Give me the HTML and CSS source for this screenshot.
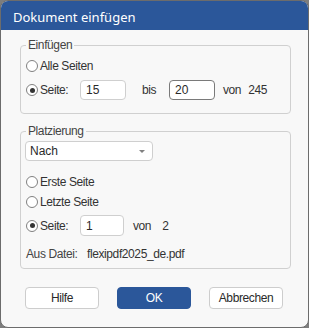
FILE: index.html
```html
<!DOCTYPE html>
<html lang="de">
<head>
    <meta charset="UTF-8">
    <meta name="viewport" content="width=device-width, initial-scale=1.0">
    <title>Dokument einfügen</title>
    <link rel="stylesheet" href="styles.css">
</head>
<body>

    <div class="dialog">
        <div class="title-bar">Dokument einfügen</div>

        <div class="dialog-body">
            <fieldset class="group group-insert">
                <legend>Einfügen</legend>

                <div class="row row-first">
                    <label class="radio-label">
                        <input type="radio" name="range"> Alle Seiten
                    </label>
                </div>

                <div class="row row-input">
                    <label class="radio-label radio-fixed">
                        <input type="radio" name="range" checked> Seite:
                    </label>
                    <input type="text" class="num-input" value="15">
                    <span class="word-bis">bis</span>
                    <input type="text" class="num-input focused" value="20">
                    <span class="word-von">von</span>
                    <span>245</span>
                </div>
            </fieldset>

            <fieldset class="group group-place">
                <legend>Platzierung</legend>

                <div class="select-box">
                    <span>Nach</span>
                    <span class="select-arrow"></span>
                </div>

                <div class="row row-radio row-gap">
                    <label class="radio-label">
                        <input type="radio" name="place"> Erste Seite
                    </label>
                </div>
                <div class="row row-radio">
                    <label class="radio-label">
                        <input type="radio" name="place"> Letzte Seite
                    </label>
                </div>
                <div class="row row-input row-page">
                    <label class="radio-label radio-fixed">
                        <input type="radio" name="place" checked> Seite:
                    </label>
                    <input type="text" class="num-input small" value="1">
                    <span class="word-von2">von</span>
                    <span>2</span>
                </div>

                <div class="row row-file">
                    <span class="file-label">Aus Datei:</span>
                    <span>flexipdf2025_de.pdf</span>
                </div>
            </fieldset>

            <div class="buttons">
                <button>Hilfe</button>
                <button class="primary">OK</button>
                <button>Abbrechen</button>
            </div>
        </div>
    </div>

</body>
</html>
```

FILE: styles.css
```css
body {
    margin: 0;
    background-color: #7d7d7d;
    font-family: "Liberation Sans", Arial, sans-serif;
    font-size: 12px;
    color: #333333;
}

.dialog {
    box-sizing: border-box;
    width: 309px;
    height: 328px;
    border: 1px solid #6c6c6c;
    border-radius: 8px;
    overflow: hidden;
    background-color: #f8f8f8;
}

.title-bar {
    height: 25px;
    padding: 4px 0 0 12px;
    line-height: 25px;
    background-color: #2b579a;
    color: #ffffff;
    font-family: "Noto Sans", "Open Sans", sans-serif;
    font-size: 13px;
}

.dialog-body {
    padding: 7px 17px 0 19px;
}

.group {
    margin: 0;
    padding: 0 5px;
    border: 1px solid #d0d0d0;
    border-radius: 4px;
    min-width: 0;
}

.group legend {
    padding: 0 2px;
    line-height: 16px;
    color: #444444;
    letter-spacing: -0.4px;
}

.group-insert {
    padding-bottom: 13px;
}

.group-place {
    margin-top: 9px;
    padding-bottom: 6px;
}

.row {
    display: flex;
    align-items: center;
    letter-spacing: -0.4px;
}

.row-first {
    height: 20px;
    margin-top: 3px;
}

.row-input {
    height: 20px;
    margin-top: 4px;
}

.row-radio {
    height: 18px;
    margin-top: 2px;
}

.row-gap {
    margin-top: 12px;
}

.row-file {
    height: 16px;
    margin-top: 10px;
}

.radio-label {
    display: flex;
    align-items: center;
}

.radio-fixed {
    width: 54px;
    flex-shrink: 0;
}

.radio-label input {
    appearance: none;
    width: 12px;
    height: 12px;
    margin: 0 2px 0 0;
    border: 1px solid #808080;
    border-radius: 50%;
    background-color: #ffffff;
    display: flex;
    align-items: center;
    justify-content: center;
}

.radio-label input:checked::after {
    content: "";
    width: 5px;
    height: 5px;
    border-radius: 50%;
    background-color: #333333;
}

.num-input {
    box-sizing: border-box;
    width: 46px;
    height: 20px;
    margin: 0;
    padding: 0 5px;
    border: 1px solid #cfcfcf;
    border-radius: 4px;
    background-color: #ffffff;
    font-family: inherit;
    font-size: 12px;
    color: #2a2a2a;
    outline: none;
}

.num-input.focused {
    border-color: #7a7a7a;
}

.num-input.small {
    width: 44px;
    height: 21px;
}

.word-bis {
    width: 27px;
    margin-left: 16px;
}

.word-von {
    margin-left: 8px;
    margin-right: 7px;
}

.word-von2 {
    margin-left: 9px;
    margin-right: 11px;
}

.row-page {
    height: 21px;
}

.select-box {
    box-sizing: border-box;
    display: flex;
    align-items: center;
    justify-content: space-between;
    width: 128px;
    height: 20px;
    margin: 2px 0 0 -1px;
    padding: 0 7px 0 4px;
    border: 1px solid #cfcfcf;
    border-radius: 4px;
    background-color: #ffffff;
    font-size: 12px;
    color: #2a2a2a;
}

.select-arrow {
    width: 0;
    height: 0;
    border-left: 3px solid transparent;
    border-right: 3px solid transparent;
    border-top: 3px solid #808080;
}

.file-label {
    width: 61px;
    color: #444444;
}

.buttons {
    display: flex;
    gap: 18px;
    margin-top: 18px;
    padding-left: 5px;
}

.buttons button {
    width: 74px;
    height: 22px;
    padding: 0;
    border: 1px solid #cdcdcd;
    border-radius: 4px;
    background-color: #ffffff;
    font-family: inherit;
    font-size: 12px;
    letter-spacing: -0.4px;
    color: #2a2a2a;
}

.buttons button.primary {
    border-color: #2b579a;
    background-color: #2b579a;
    color: #ffffff;
}
```
